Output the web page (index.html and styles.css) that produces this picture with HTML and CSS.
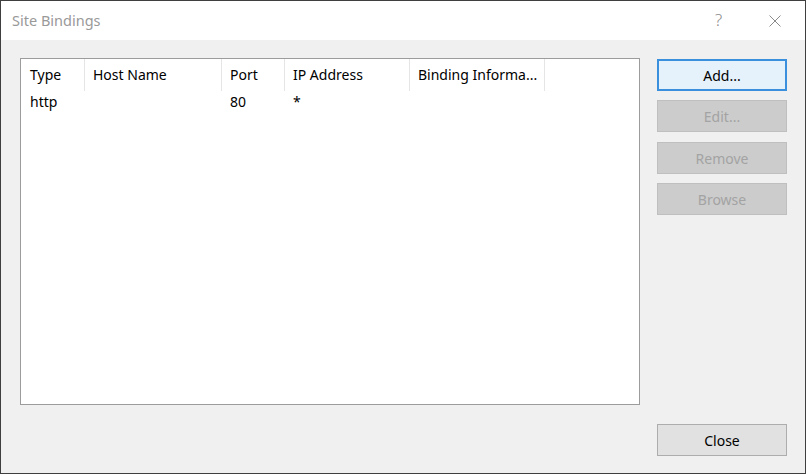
FILE: index.html
```html
<!DOCTYPE html>
<html>
<head>
<meta charset="utf-8">
<link rel="stylesheet" href="styles.css">
</head>
<body>
<div class="window">
  <div class="titlebar">
    <span class="title">Site Bindings</span>
    <span class="help">?</span>
    <svg class="close-x" width="12" height="12" viewBox="0 0 12 12"><path d="M0.5 0.5 L11.5 11.5 M11.5 0.5 L0.5 11.5" stroke="#8a8a8a" stroke-width="1" fill="none"/></svg>
  </div>
  <div class="content">
    <div class="list">
      <div class="row header">
        <div class="col c-type">Type</div>
        <div class="col c-host">Host Name</div>
        <div class="col c-port">Port</div>
        <div class="col c-ip">IP Address</div>
        <div class="col c-bind">Binding Informa...</div>
      </div>
      <div class="row data">
        <div class="col c-type">http</div>
        <div class="col c-host"></div>
        <div class="col c-port">80</div>
        <div class="col c-ip">*</div>
        <div class="col c-bind"></div>
      </div>
    </div>
    <div class="side">
      <button class="btn default">Add...</button>
      <button class="btn disabled b-edit">Edit...</button>
      <button class="btn disabled b-remove">Remove</button>
      <button class="btn disabled b-browse">Browse</button>
      <button class="btn normal b-close">Close</button>
    </div>
  </div>
</div>
</body>
</html>
```
FILE: styles.css
```css
html, body {
  margin: 0;
  padding: 0;
  background: #ffffff;
}
body {
  font-family: "Noto Sans", "Open Sans", sans-serif;
  font-size: 14px;
  color: #000;
}
.window {
  width: 806px;
  height: 474px;
  box-sizing: border-box;
  border: 1px solid #3f3f3f;
  display: flex;
  flex-direction: column;
  background: #f0f0f0;
}
.titlebar {
  height: 39px;
  background: #ffffff;
  display: flex;
  align-items: center;
  position: relative;
}
.title {
  margin-left: 11px;
  font-size: 14.5px;
  color: #999999;
  margin-top: -1px;
}
.help {
  position: absolute;
  left: 714px;
  top: 9px;
  font-size: 17px;
  line-height: 20px;
  color: #8a8a8a;
  font-family: "Noto Sans", sans-serif;
  font-weight: 300;
}
.close-x {
  position: absolute;
  left: 768px;
  top: 14px;
}
.content {
  flex: 1;
  display: flex;
  padding: 18px 0 17px 19px;
}
.list {
  width: 620px;
  height: 347px;
  box-sizing: border-box;
  border: 1px solid #9c9c9c;
  background: #fff;
  align-self: flex-start;
}
.row {
  display: flex;
}
.header {
  height: 32px;
}
.header .col {
  border-right: 1px solid #e5e5e5;
  line-height: 30px;
  padding-top: 1px;
}
.data {
  height: 22px;
  line-height: 22px;
}
.col {
  box-sizing: border-box;
  padding-left: 8px;
  white-space: nowrap;
  overflow: hidden;
}
.c-type { width: 64px; padding-left: 9px; }
.c-host { width: 137px; }
.c-port { width: 63px; }
.c-ip { width: 125px; }
.c-bind { width: 135px; }
.side {
  margin-left: 17px;
  width: 130px;
  display: flex;
  flex-direction: column;
  padding-top: 1px;
}
.btn {
  width: 130px;
  height: 32px;
  box-sizing: border-box;
  font-family: "Noto Sans", "Open Sans", sans-serif;
  font-size: 14px;
  padding: 0;
  margin: 0;
}
.default {
  border: 2px solid #3a90dc;
  background: #e5f1fb;
  color: #000;
}
.disabled {
  border: 1px solid #bfbfbf;
  background: #cccccc;
  color: #a3a3a3;
}
.normal {
  border: 1px solid #adadad;
  background: #e1e1e1;
  color: #000;
}
.b-edit { margin-top: 9px; }
.b-remove { margin-top: 10px; }
.b-browse { margin-top: 9px; }
.b-close { margin-top: auto; }
```
